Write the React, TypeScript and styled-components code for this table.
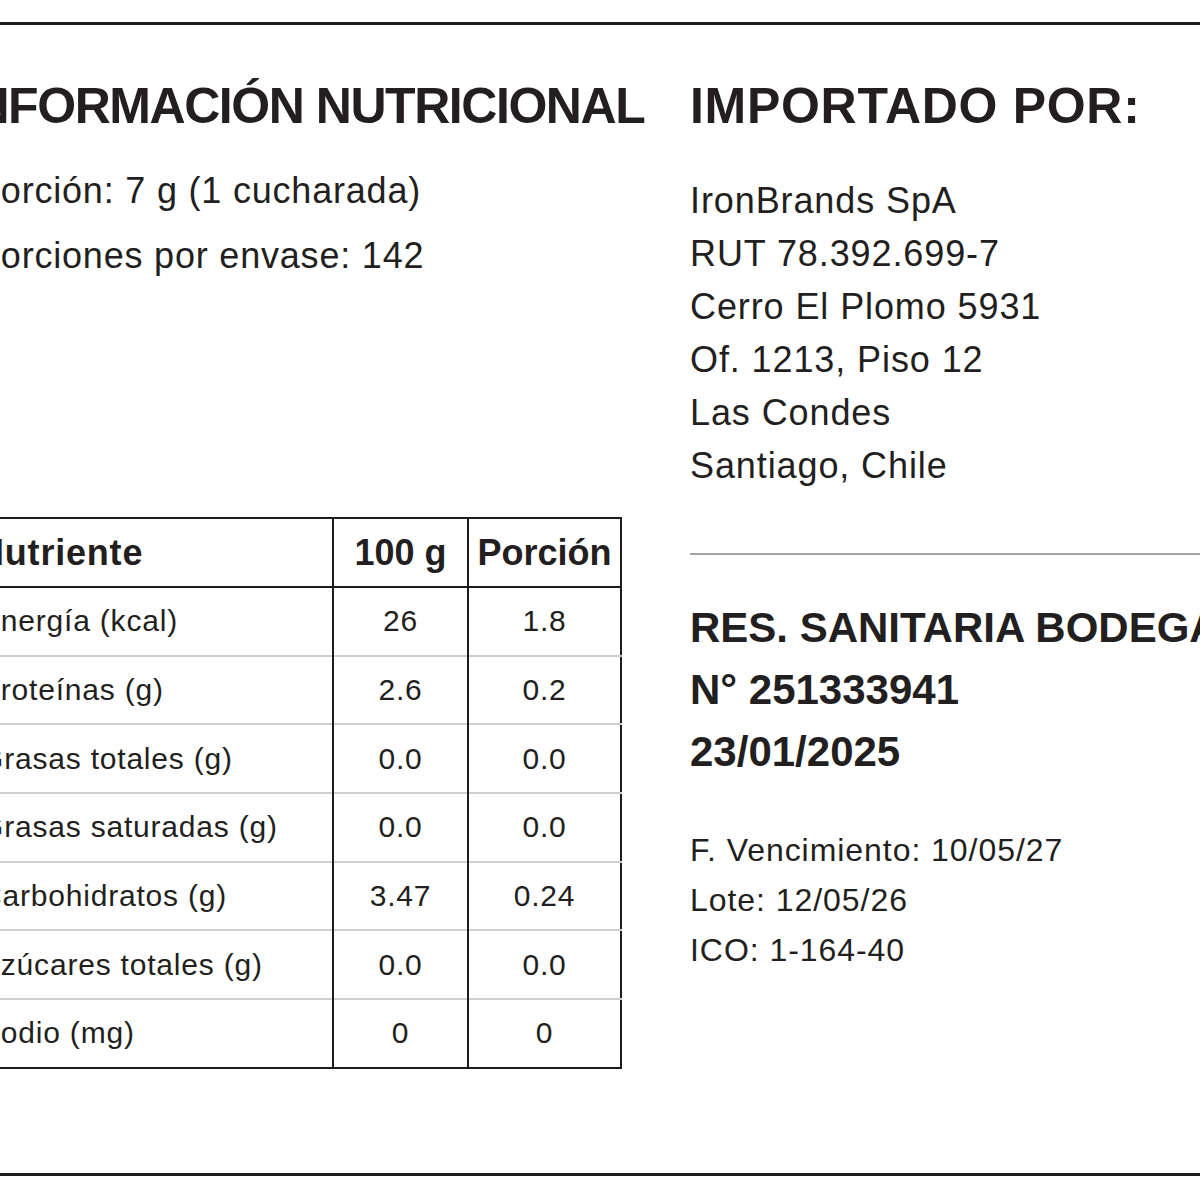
import React from 'react';
import styled, { createGlobalStyle } from 'styled-components';

const GlobalStyle = createGlobalStyle`
  html, body {
    margin: 0;
    padding: 0;
    background: #fff;
  }
  body {
    font-family: 'Liberation Sans', Arial, sans-serif;
    color: #231f20;
    overflow: hidden;
  }
`;

const Page = styled.div`
  width: 1200px;
  height: 1200px;
  overflow: hidden;
  background: #fff;
`;

const Frame = styled.div`
  box-sizing: border-box;
  margin-top: 22px;
  height: 1154px;
  border-top: 3px solid #1c1c1c;
  border-bottom: 3px solid #1c1c1c;
  overflow: hidden;
`;

const Columns = styled.div`
  display: grid;
  grid-template-columns: 714px 1fr;
  margin-left: -24px;
  padding-top: 51px;
`;

const Column = styled.div`
  display: flex;
  flex-direction: column;
  white-space: nowrap;
`;

const Heading = styled.h1<{ $shift?: number; $spacing?: number }>`
  margin: 0 0 0 ${(p) => p.$shift ?? 0}px;
  font-size: 50px;
  line-height: 60px;
  font-weight: 700;
  letter-spacing: ${(p) => p.$spacing ?? 0}px;
`;

const Serving = styled.div`
  margin-top: 22px;
  font-size: 36px;
  line-height: 65px;
  letter-spacing: 0.8px;
`;

const Table = styled.table`
  margin: 229px 0 0 -16px;
  width: 660px;
  border-collapse: collapse;
  table-layout: fixed;
  border: 2px solid #1c1c1c;
`;

const Th = styled.th<{ $left?: boolean }>`
  height: 67px;
  padding: 0 ${(p) => (p.$left ? '0 0 16px' : '0')};
  font-size: 36px;
  font-weight: 700;
  letter-spacing: ${(p) => (p.$left ? '0.8px' : '0')};
  text-align: ${(p) => (p.$left ? 'left' : 'center')};
  vertical-align: middle;
  border-left: 2px solid #1c1c1c;
  border-bottom: 2px solid #1c1c1c;
`;

const Td = styled.td<{ $left?: boolean; $first?: boolean }>`
  height: 66.7px;
  padding: 0 ${(p) => (p.$left ? '0 0 18px' : '0')};
  font-size: 30px;
  letter-spacing: 0.8px;
  text-align: ${(p) => (p.$left ? 'left' : 'center')};
  vertical-align: middle;
  border-left: 2px solid #1c1c1c;
  border-top: 2px solid ${(p) => (p.$first ? '#1c1c1c' : '#cfcfcf')};
`;

const Address = styled.div`
  margin-top: 38px;
  font-size: 36px;
  line-height: 53px;
  letter-spacing: 0.9px;
`;

const Divider = styled.hr`
  margin: 61px 0 0;
  border: none;
  border-top: 2px solid #a3a3a3;
  width: 100%;
`;

const Registry = styled.div`
  margin-top: 42px;
  font-size: 42px;
  line-height: 62px;
  font-weight: 700;
`;

const Details = styled.div`
  margin-top: 42px;
  font-size: 32px;
  line-height: 50px;
  letter-spacing: 0.95px;
`;

const rows: [string, string, string][] = [
  ['Energía (kcal)', '26', '1.8'],
  ['Proteínas (g)', '2.6', '0.2'],
  ['Grasas totales (g)', '0.0', '0.0'],
  ['Grasas saturadas (g)', '0.0', '0.0'],
  ['Carbohidratos (g)', '3.47', '0.24'],
  ['Azúcares totales (g)', '0.0', '0.0'],
  ['Sodio (mg)', '0', '0'],
];

const App: React.FC = () => {
  return (
    <Page>
      <GlobalStyle />
      <Frame>
        <Columns>
          <Column>
            <Heading $shift={-15} $spacing={-1.45}>
              INFORMACIÓN NUTRICIONAL
            </Heading>
            <Serving>
              <div>Porción: 7 g (1 cucharada)</div>
              <div>Porciones por envase: 142</div>
            </Serving>
            <Table>
              <colgroup>
                <col style={{ width: 372 }} />
                <col style={{ width: 135 }} />
                <col style={{ width: 153 }} />
              </colgroup>
              <thead>
                <tr>
                  <Th $left>Nutriente</Th>
                  <Th>100 g</Th>
                  <Th>Porción</Th>
                </tr>
              </thead>
              <tbody>
                {rows.map(([name, per100, portion], i) => (
                  <tr key={name}>
                    <Td $left $first={i === 0}>
                      {name}
                    </Td>
                    <Td $first={i === 0}>{per100}</Td>
                    <Td $first={i === 0}>{portion}</Td>
                  </tr>
                ))}
              </tbody>
            </Table>
          </Column>
          <Column>
            <Heading $spacing={0.7}>IMPORTADO POR:</Heading>
            <Address>
              <div>IronBrands SpA</div>
              <div>RUT 78.392.699-7</div>
              <div>Cerro El Plomo 5931</div>
              <div>Of. 1213, Piso 12</div>
              <div>Las Condes</div>
              <div>Santiago, Chile</div>
            </Address>
            <Divider />
            <Registry>
              <div>RES. SANITARIA BODEGA</div>
              <div>N° 251333941</div>
              <div>23/01/2025</div>
            </Registry>
            <Details>
              <div>F. Vencimiento: 10/05/27</div>
              <div>Lote: 12/05/26</div>
              <div>ICO: 1-164-40</div>
            </Details>
          </Column>
        </Columns>
      </Frame>
    </Page>
  );
};

export default App;
